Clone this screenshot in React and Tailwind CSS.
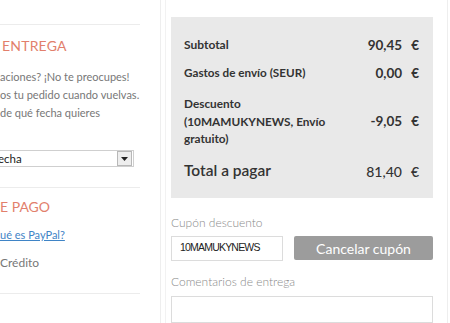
import React from "react";

function Val({ n, cls }) {
  return (
    <span className={"flex items-center " + cls}>
      <span>{n}</span>
      <span className="ml-[9px]">€</span>
    </span>
  );
}

export default function App() {
  return (
    <div className="w-[450px] h-[323px] overflow-hidden bg-white flex font-['Lato',sans-serif]">
      {/* Left column */}
      <div className="w-[140px] shrink-0 flex flex-col overflow-hidden">
        <div className="h-[25px] shrink-0 border-b border-[#ececec]" />
        <div className="mt-[12px] text-[14px] leading-[18px] text-[#e27f6c] tracking-[0.2px] pl-[2px]">ENTREGA</div>
        <div className="mt-[13px] text-[11px] leading-[18px] text-[#777] whitespace-nowrap">
          <div>aciones? ¡No te preocupes!</div>
          <div>os tu pedido cuando vuelvas.</div>
          <div>de qué fecha quieres</div>
        </div>
        <div className="mt-[28px] w-[134px] h-[17px] shrink-0 flex items-center border border-[#cfcfcf] border-l-0 bg-white overflow-hidden">
          <div className="flex-1 text-[11.5px] text-[#222] leading-[15px] -ml-[2px]">echa</div>
          <div className="w-[15px] h-[15px] mr-[1px] flex items-center justify-center bg-[#eeeeee] border border-[#b8b8b8]">
            <svg width="7" height="4" viewBox="0 0 7 4"><path d="M0 0 H7 L3.5 4 Z" fill="#222" /></svg>
          </div>
        </div>
        <div className="mt-[20px] h-0 border-b border-[#ececec]" />
        <div className="mt-[10px] text-[14px] leading-[18px] text-[#e27f6c] whitespace-nowrap">E PAGO</div>
        <div className="mt-[11px] text-[11px] leading-[16px] text-[#3f84c6] underline">ué es PayPal?</div>
        <div className="mt-[12px] text-[12px] leading-[16px] text-[#777]">Crédito</div>
        <div className="mt-[22px] h-0 border-b border-[#ececec]" />
      </div>
      <div className="w-[20px] shrink-0" />
      {/* Right column */}
      <div className="w-[288px] shrink-0 border-l border-r border-[#eeeeee] pl-[4px]">
        <div className="h-full border-l border-[#f2f2f2] pl-[5px] pr-[14px] flex flex-col">
          <div className="mt-[17px] bg-[#e9e9e9] pl-[13px] pr-[14px] pt-[19px] pb-[14px] flex flex-col text-[#333]">
            <div className="flex justify-between items-center h-[18px] text-[12px] font-bold">
              <span>Subtotal</span>
              <Val n="90,45" cls="text-[13.5px]" />
            </div>
            <div className="mt-[10px] flex justify-between items-center h-[18px] text-[12px] font-bold">
              <span className="text-[11.7px]">Gastos de envío (SEUR)</span>
              <Val n="0,00" cls="text-[13.5px]" />
            </div>
            <div className="mt-[13px] flex justify-between items-center text-[11.8px] font-bold">
              <span className="leading-[17.5px]">Descuento<br />(10MAMUKYNEWS, Envío<br />gratuito)</span>
              <Val n="-9,05" cls="text-[13.5px]" />
            </div>
            <div className="mt-[11px] flex justify-between items-center h-[25px]">
              <span className="text-[15.5px] font-semibold">Total a pagar</span>
              <Val n="81,40" cls="text-[14px] font-medium" />
            </div>
          </div>
          <div className="mt-[17px] text-[12px] leading-[16px] text-[#8a8a8a] font-light">Cupón descuento</div>
          <div className="mt-[5px] flex items-center">
            <div className="w-[112px] h-[25px] border border-[#dcdcdc] flex items-center pl-[8px] text-[10.5px] tracking-[-0.8px] text-[#222] font-['Liberation_Sans',sans-serif]">10MAMUKYNEWS</div>
            <div className="ml-[11px] flex-1 h-[24px] bg-[#9c9c9c] rounded-[2px] flex items-center justify-center text-[14px] text-white">Cancelar cupón</div>
          </div>
          <div className="mt-[13px] text-[12px] leading-[16px] text-[#8a8a8a] font-light">Comentarios de entrega</div>
          <div className="mt-[6px] h-[60px] border border-[#dcdcdc]" />
        </div>
      </div>
    </div>
  );
}
